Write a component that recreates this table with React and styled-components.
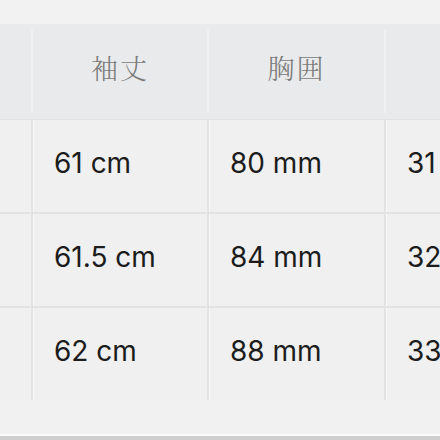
import styled, { createGlobalStyle } from 'styled-components';

const GlobalStyle = createGlobalStyle`
  html, body {
    margin: 0;
    padding: 0;
    background: #f2f2f2;
  }
  body {
    width: 440px;
    height: 440px;
    overflow: hidden;
  }
`;

const columns = [
  { key: 'size', label: 'サイズ' },
  { key: 'sleeve', label: '袖丈' },
  { key: 'chest', label: '胸囲' },
  { key: 'length', label: '着丈' },
];

const rows = [
  { size: 'S', sleeve: '61 cm', chest: '80 mm', length: '31 cm' },
  { size: 'M', sleeve: '61.5 cm', chest: '84 mm', length: '32 cm' },
  { size: 'L', sleeve: '62 cm', chest: '88 mm', length: '33 cm' },
];

const COLS = '174px 174px 175px 180px';

export default function App() {
  return (
    <>
      <GlobalStyle />
      <Page>
        <Table>
          <HeaderRow>
            {columns.map((c) => (
              <HeaderCell key={c.key}>{c.label}</HeaderCell>
            ))}
          </HeaderRow>
          <Body>
            {rows.map((r) => (
              <BodyRow key={r.size}>
                {columns.map((c) => (
                  <Cell key={c.key}>{r[c.key]}</Cell>
                ))}
              </BodyRow>
            ))}
          </Body>
        </Table>
        <Footer />
      </Page>
    </>
  );
}

const Page = styled.div`
  width: 440px;
  height: 440px;
  display: flex;
  flex-direction: column;
  padding-top: 24px;
  box-sizing: border-box;
  overflow: hidden;
`;

const Table = styled.div`
  margin-left: -143px;
  display: flex;
  flex-direction: column;
`;

const HeaderRow = styled.div`
  display: grid;
  grid-template-columns: ${COLS};
  column-gap: 2px;
  height: 95px;
  background: #e9eaeb;
  border-bottom: 1px solid #e1e2e3;
`;

const HeaderCell = styled.div`
  display: flex;
  align-items: center;
  justify-content: center;
  padding-bottom: 8px;
  font-family: "Noto Serif CJK JP", "Noto Sans CJK JP", serif;
  font-weight: 300;
  font-size: 27px;
  letter-spacing: 2px;
  color: #7a7a7a;
  box-shadow: -8px 0 0 -6px #eef0f1;
`;

const Body = styled.div`
  display: flex;
  flex-direction: column;
  gap: 2px;
  background: #e3e3e3;
`;

const BodyRow = styled.div`
  display: grid;
  grid-template-columns: ${COLS};
  column-gap: 2px;
  height: 92px;
`;

const Cell = styled.div`
  display: flex;
  align-items: center;
  padding: 0 0 6px 20px;
  background: #f0f0f0;
  border-left: 1px solid #f7f7f7;
  font-family: Inter, "Noto Sans", sans-serif;
  font-size: 28px;
  color: #1c1c1c;
  white-space: nowrap;
`;

const Footer = styled.div`
  flex: 1;
  background: #f1f1f1;
  border-bottom: 4px solid #cfcfcf;
  box-shadow: inset 0 -2px 0 #fafafa;
`;
